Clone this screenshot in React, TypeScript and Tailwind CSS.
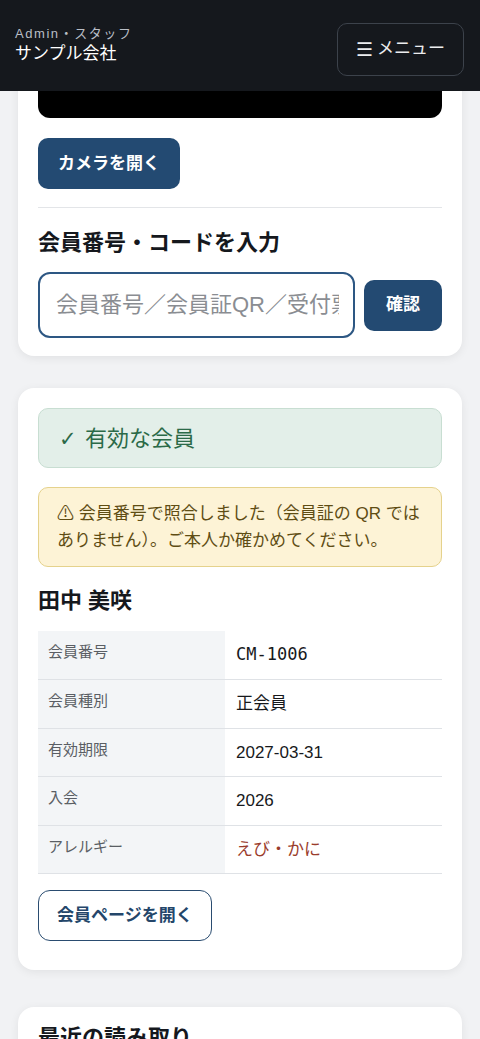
import React, { useState } from 'react';

const font = "font-['Liberation_Sans','Noto_Sans_CJK_JP',sans-serif]";

interface Row {
  label: string;
  value: string;
  mono?: boolean;
  alert?: boolean;
}

const rows: Row[] = [
  { label: '会員番号', value: 'CM-1006', mono: true },
  { label: '会員種別', value: '正会員' },
  { label: '有効期限', value: '2027-03-31' },
  { label: '入会', value: '2026' },
  { label: 'アレルギー', value: 'えび・かに', alert: true },
];

const App: React.FC = () => {
  const [code, setCode] = useState('');

  return (
    <div className={`min-h-screen bg-[#f1f2f4] text-[17px] ${font}`}>
      {/* Header */}
      <header className="sticky top-0 z-10 h-[91px] bg-[#15181d] flex items-center justify-between px-[15px]">
        <div className="flex flex-col -mt-[2px]">
          <span className="text-[13px] leading-[18px] tracking-[0.12em] text-[#b9bec6]">Admin・スタッフ</span>
          <span className="text-[17px] leading-[22px] text-white">サンプル会社</span>
        </div>
        <button className="mt-[7px] h-[53px] px-[18px] mr-[1px] rounded-[10px] border border-[#3c424b] text-[#ecedef] text-[17px] flex items-center gap-1">
          <span className="text-[19px] leading-none">☰</span>
          <span>メニュー</span>
        </button>
      </header>

      <main className="-mt-[240px] px-[18px] pt-[24px] pb-10 flex flex-col">
        {/* Scanner */}
        <section className="bg-white rounded-[16px] shadow-[0_2px_10px_rgba(0,0,0,0.07)] p-[20px] pb-[18px]">
          <div className="h-[223px] bg-black rounded-[12px]" />
          <button className="mt-[20px] h-[51px] px-[20px] rounded-[10px] bg-[#234a72] text-white font-bold">
            カメラを開く
          </button>
          <hr className="mt-[18px] border-t border-[#e3e5e8]" />
          <h2 className="mt-[20px] text-[22px] leading-[30px] font-bold text-[#15181d]">会員番号・コードを入力</h2>
          <div className="mt-[14px] flex items-center gap-[9px]">
            <input
              value={code}
              onChange={(e) => setCode(e.target.value)}
              placeholder="会員番号／会員証QR／受付票"
              className="min-w-0 flex-1 h-[66px] rounded-[12px] border-2 border-[#2d5783] pl-[16px] pr-[14px] text-[22px] text-[#222] placeholder:text-[#8a8d92] outline-none"
            />
            <button className="h-[51px] w-[78px] shrink-0 rounded-[10px] bg-[#234a72] text-white font-bold">
              確認
            </button>
          </div>
        </section>

        {/* Result */}
        <section className="mt-[32px] bg-white rounded-[16px] shadow-[0_2px_10px_rgba(0,0,0,0.07)] p-[20px] pb-[29px]">
          <div className="h-[60px] rounded-[10px] bg-[#e3efe9] border border-[#c8ded2] px-[20px] flex items-center gap-[8px] text-[22px] text-[#2b6a48]">
            <span className="font-['DejaVu_Sans',sans-serif] font-extralight text-[21px] mt-[3px]">✓</span>
            <span>有効な会員</span>
          </div>
          <div className="mt-[19px] rounded-[10px] bg-[#fdf3d6] border border-[#e5d28c] px-[18px] py-[12px] leading-[27px] text-[#5f4d14]">
            ⚠ 会員番号で照合しました（会員証の QR ではありません）。ご本人か確かめてください。
          </div>
          <h3 className="mt-[18px] text-[22px] leading-[32px] font-bold text-[#15181d]">田中 美咲</h3>
          <table className="mt-[14px] w-full border-collapse">
            <tbody>
              {rows.map((r) => (
                <tr key={r.label} className="border-b border-[#dfe2e6] h-[48.5px]">
                  <th className="w-[187px] bg-[#f3f5f7] text-left align-top pt-[10px] px-[10px] text-[15px] font-normal text-[#5a5e64]">
                    {r.label}
                  </th>
                  <td
                    className={`px-[11px] ${r.mono ? "font-['DejaVu_Sans_Mono',monospace]" : ''} ${
                      r.alert ? 'text-[#9a3c2c]' : 'text-[#17191c]'
                    }`}
                  >
                    {r.value}
                  </td>
                </tr>
              ))}
            </tbody>
          </table>
          <button className="mt-[16px] h-[51px] px-[18px] rounded-[12px] border border-[#2a4c70] text-[#24466a] font-bold">
            会員ページを開く
          </button>
        </section>

        {/* Recent */}
        <section className="mt-[37px] bg-white rounded-[16px] shadow-[0_2px_10px_rgba(0,0,0,0.07)] p-[20px] pt-[14px]">
          <h2 className="text-[22px] font-bold text-[#15181d]">最近の読み取り</h2>
          <div className="h-[200px]" />
        </section>
      </main>
    </div>
  );
};

export default App;
